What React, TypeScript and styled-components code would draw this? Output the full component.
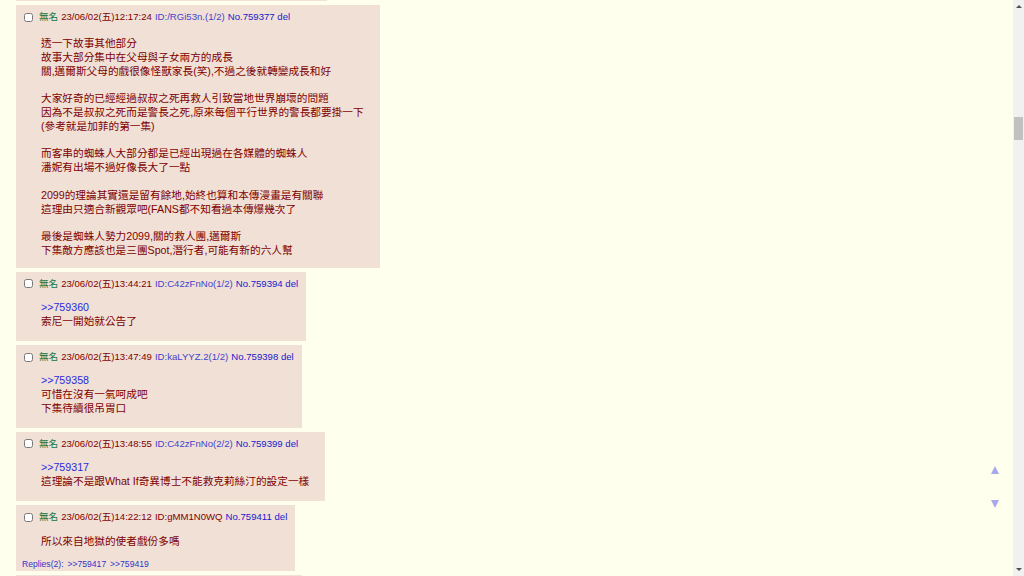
import React, { ReactElement } from 'react';
import styled, { createGlobalStyle } from 'styled-components';

const GlobalStyle = createGlobalStyle`
  html, body {
    margin: 0;
    padding: 0;
    overflow: hidden;
    background: #ffffee;
  }
  body {
    font-family: "Liberation Sans", "Noto Sans CJK TC", sans-serif;
    color: #800000;
  }
`;

const Page = styled.div`
  display: flex;
  height: 576px;
  width: 1024px;
`;

const Thread = styled.div`
  flex: 1;
  display: flex;
  flex-direction: column;
  align-items: flex-start;
  gap: 4px;
  padding-left: 16px;
  overflow: hidden;
`;

const PostBox = styled.div<{ $stub?: boolean; $w?: number }>`
  background: #f0e0d6;
  padding-top: ${(p) => (p.$stub ? 0 : 5)}px;
  height: ${(p) => (p.$stub ? '1px' : 'auto')};
  width: ${(p) => (p.$w ? `${p.$w}px` : 'auto')};
  flex-shrink: 0;
`;

const Header = styled.div`
  display: flex;
  align-items: center;
  gap: 3px;
  padding-left: 8px;
  margin-right: 8px;
  font-size: 9.6px;
  line-height: 14px;
  white-space: nowrap;
`;

const Check = styled.input`
  width: 9px;
  height: 9px;
  margin: 0 3px 0 0;
`;

const Name = styled.span`
  color: #117743;
`;

const Stamp = styled.span`
  color: #800000;
`;

const Ident = styled.span<{ $dark?: boolean }>`
  color: ${(p) => (p.$dark ? '#800000' : '#4444cc')};
`;

const Num = styled.span`
  color: #1a1acc;
`;

const Body = styled.div<{ $top: number; $bottom: number }>`
  margin: ${(p) => p.$top}px 16px ${(p) => p.$bottom}px 25px;
  font-size: 10.67px;
  line-height: 13.8px;
  white-space: pre-line;
`;

const QuoteLink = styled.div`
  color: #2a2ae0;
`;

const Replies = styled.div`
  margin: 0 0 0 6px;
  padding-bottom: 2px;
  font-size: 8.6px;
  line-height: 10px;
  color: #3333cc;
  word-spacing: 1.5px;
`;

const ScrollTrack = styled.div`
  width: 11px;
  background: #f1f1f1;
  display: flex;
  flex-direction: column;
  align-items: center;
`;

const Arrow = styled.div<{ $down?: boolean }>`
  width: 0;
  height: 0;
  border-left: 3px solid transparent;
  border-right: 3px solid transparent;
  ${(p) => (p.$down ? 'border-top: 3px solid #505050;' : 'border-bottom: 3px solid #505050;')}
  margin-top: ${(p) => (p.$down ? 'auto' : '5px')};
  margin-bottom: ${(p) => (p.$down ? '5px' : '0')};
`;

const Thumb = styled.div`
  width: 9px;
  height: 23px;
  margin-top: 109px;
  background: #c1c1c1;
`;

const NavArrow = styled.div<{ $down?: boolean }>`
  position: fixed;
  right: 25px;
  top: ${(p) => (p.$down ? 500 : 466)}px;
  width: 0;
  height: 0;
  border-left: 4.5px solid transparent;
  border-right: 4.5px solid transparent;
  ${(p) => (p.$down ? 'border-top: 8px solid #a8a8ee;' : 'border-bottom: 8px solid #a8a8ee;')}
`;

interface Post {
  stamp: string;
  id: string;
  no: string;
  darkId?: boolean;
  quote?: string;
  text: string;
  replies?: string[];
  top: number;
  bottom: number;
}

const posts: Post[] = [
  {
    stamp: '23/06/02(五)12:17:24',
    id: 'ID:/RGi53n.(1/2)',
    no: 'No.759377',
    top: 13,
    bottom: 10,
    text: '透一下故事其他部分\n故事大部分集中在父母與子女兩方的成長\n關,邁爾斯父母的戲很像怪獸家長(笑),不過之後就轉變成長和好\n\n大家好奇的已經經過叔叔之死再救人引致當地世界崩壞的問題\n因為不是叔叔之死而是警長之死,原來每個平行世界的警長都要掛一下\n(參考就是加菲的第一集)\n\n而客串的蜘蛛人大部分都是已經出現過在各媒體的蜘蛛人\n潘妮有出場不過好像長大了一點\n\n2099的理論其實還是留有餘地,始終也算和本傳漫畫是有關聯\n這理由只適合新觀眾吧(FANS都不知看過本傳爆幾次了\n\n最後是蜘蛛人勢力2099,關的救人團,邁爾斯\n下集敵方應該也是三團Spot,潛行者,可能有新的六人幫',
  },
  {
    stamp: '23/06/02(五)13:44:21',
    id: 'ID:C42zFnNo(1/2)',
    no: 'No.759394',
    quote: '>>759360',
    top: 10,
    bottom: 13,
    text: '索尼一開始就公告了',
  },
  {
    stamp: '23/06/02(五)13:47:49',
    id: 'ID:kaLYYZ.2(1/2)',
    no: 'No.759398',
    quote: '>>759358',
    top: 10,
    bottom: 12,
    text: '可惜在沒有一氣呵成吧\n下集待續很吊胃口',
  },
  {
    stamp: '23/06/02(五)13:48:55',
    id: 'ID:C42zFnNo(2/2)',
    no: 'No.759399',
    quote: '>>759317',
    top: 10,
    bottom: 13,
    text: '這理論不是跟What If奇異博士不能救克莉絲汀的設定一樣',
  },
  {
    stamp: '23/06/02(五)14:22:12',
    id: 'ID:gMM1N0WQ',
    no: 'No.759411',
    darkId: true,
    top: 11,
    bottom: 10,
    text: '所以來自地獄的使者戲份多嗎',
    replies: ['>>759417', '>>759419'],
  },
];

const Reply = ({ post }: { post: Post }): ReactElement => (
  <PostBox>
    <Header>
      <Check type="checkbox" />
      <Name>無名</Name>
      <Stamp>{post.stamp}</Stamp>
      <Ident $dark={post.darkId}>{post.id}</Ident>
      <Num>{post.no} del</Num>
    </Header>
    <Body $top={post.top} $bottom={post.bottom}>
      {post.quote && <QuoteLink>{post.quote}</QuoteLink>}
      {post.text}
    </Body>
    {post.replies && (
      <Replies>
        Replies({post.replies.length}): {post.replies.join(' ')}
      </Replies>
    )}
  </PostBox>
);

const App = (): ReactElement => (
  <>
    <GlobalStyle />
    <Page>
      <Thread>
        <PostBox $stub $w={311} />
        {posts.map((p) => (
          <Reply key={p.no} post={p} />
        ))}
        <PostBox $stub $w={286} />
      </Thread>
      <ScrollTrack>
        <Arrow />
        <Thumb />
        <Arrow $down />
      </ScrollTrack>
    </Page>
    <NavArrow />
    <NavArrow $down />
  </>
);

export default App;
